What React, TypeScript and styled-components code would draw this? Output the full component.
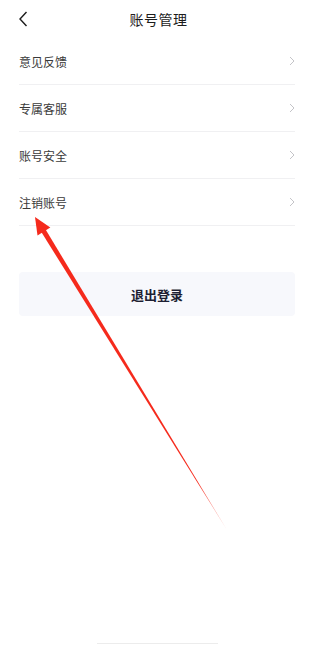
import React from 'react';
import styled, { createGlobalStyle } from 'styled-components';

const GlobalStyle = createGlobalStyle`
  html, body {
    margin: 0;
    padding: 0;
    background: #fff;
  }
  body {
    font-family: "Noto Sans CJK SC", "Noto Sans", sans-serif;
  }
`;

const Styles = {
  Page: styled.div`
    position: relative;
    width: 317px;
    height: 646px;
    overflow: hidden;
    background: #fff;
    display: flex;
    flex-direction: column;
  `,
  Header: styled.div`
    position: relative;
    height: 38px;
    display: flex;
    align-items: center;
    justify-content: center;
  `,
  Back: styled.div`
    position: absolute;
    left: 14px;
    top: 10px;
    width: 18px;
    height: 18px;
    display: flex;
    align-items: center;
    justify-content: center;
  `,
  Title: styled.h1`
    margin: 0;
    font-size: 14px;
    font-weight: 400;
    color: #1c1c1c;
    letter-spacing: 0.5px;
  `,
  List: styled.div`
    display: flex;
    flex-direction: column;
    padding: 0 22px 0 19px;
  `,
  Row: styled.div`
    height: 46px;
    display: flex;
    align-items: center;
    justify-content: space-between;
    border-bottom: 1px solid #f0f0f2;
  `,
  Label: styled.span`
    font-size: 12px;
    color: #3a3a3a;
  `,
  Logout: styled.div`
    margin: 46px 22px 0 19px;
    height: 44px;
    border-radius: 4px;
    background: #f7f8fc;
    display: flex;
    align-items: center;
    justify-content: center;
    font-size: 13px;
    font-weight: 700;
    color: #1d1f33;
  `,
  HomeBar: styled.div`
    position: absolute;
    left: 97px;
    bottom: 2px;
    width: 121px;
    height: 1px;
    background: #ececec;
  `,
  Overlay: styled.svg`
    position: absolute;
    left: 0;
    top: 0;
    pointer-events: none;
  `,
};

const Chevron = () => (
  <svg width='6' height='10' viewBox='0 0 6 10'>
    <path d='M1 1l4 4-4 4' fill='none' stroke='#c4c4c8' strokeWidth='1' />
  </svg>
);

const items = ['意见反馈', '专属客服', '账号安全', '注销账号'];

const App = () => {
  return (
    <>
      <GlobalStyle />
      <Styles.Page>
        <Styles.Header>
          <Styles.Back>
            <svg width='10' height='16' viewBox='0 0 10 16'>
              <path d='M8.5 1L2 8l6.5 7' fill='none' stroke='#1c1c1c' strokeWidth='1.4' />
            </svg>
          </Styles.Back>
          <Styles.Title>账号管理</Styles.Title>
        </Styles.Header>

        <Styles.List>
          {items.map((item) => (
            <Styles.Row key={item}>
              <Styles.Label>{item}</Styles.Label>
              <Chevron />
            </Styles.Row>
          ))}
        </Styles.List>

        <Styles.Logout>退出登录</Styles.Logout>

        <Styles.HomeBar />

        <Styles.Overlay width='317' height='646' viewBox='0 0 317 646'>
          <defs>
            <linearGradient id='fade' gradientUnits='userSpaceOnUse' x1='35' y1='217' x2='227' y2='530'>
              <stop offset='0' stopColor='#f52a1c' />
              <stop offset='0.85' stopColor='#f52a1c' />
              <stop offset='1' stopColor='#f52a1c' stopOpacity='0.3' />
            </linearGradient>
          </defs>
          <polygon points='40.2,230.2 44.4,227.6 227,530' fill='url(#fade)' />
          <polygon points='35,217 37.5,235.4 50.3,227.6' fill='#f52a1c' />
        </Styles.Overlay>
      </Styles.Page>
    </>
  );
};

export default App;
